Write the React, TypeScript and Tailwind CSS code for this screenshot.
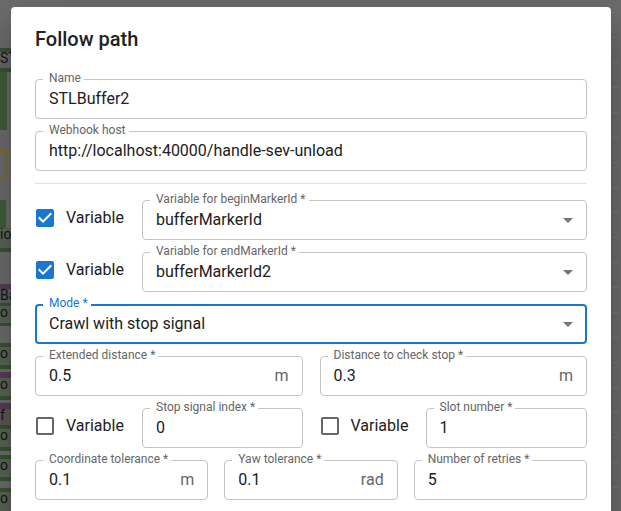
import { ReactNode } from "react";
import clsx from "clsx";

// pieces of the workflow canvas that show behind the dialog's backdrop
const leftNodes = [
  { top: 48, height: 4, width: 40, cls: "bg-[#3a5535]" },
  { top: 52, height: 16, width: 40, cls: "bg-[#6a6a6a]", text: "STL" },
  { top: 68, height: 4, width: 40, cls: "bg-[#3a5535]" },
  { top: 72, height: 58, width: 7, cls: "bg-[#41603b]" },
  { top: 150, height: 30, width: 8, cls: "border-[3px] border-l-0 border-[#7f6f30]" },
  { top: 200, height: 28, width: 6, cls: "bg-[#41603b]" },
  { top: 228, height: 20, width: 40, cls: "bg-[#5c6757]", text: "io" },
  { top: 248, height: 4, width: 40, cls: "bg-[#3a5535]" },
  { top: 284, height: 5, width: 40, cls: "bg-[#5a3e5a]" },
  { top: 289, height: 14, width: 40, cls: "bg-[#636363]", text: "Ba" },
  { top: 303, height: 3, width: 40, cls: "bg-[#3a5535]" },
  { top: 306, height: 17, width: 40, cls: "bg-[#5c6757]", text: "o" },
  { top: 323, height: 3, width: 40, cls: "bg-[#3a5535]" },
  { top: 343, height: 4, width: 40, cls: "bg-[#3a5535]" },
  { top: 347, height: 18, width: 40, cls: "bg-[#5c6757]", text: "o" },
  { top: 365, height: 4, width: 40, cls: "bg-[#3a5535]" },
  { top: 372, height: 6, width: 40, cls: "bg-[#5a3e5a]" },
  { top: 378, height: 18, width: 40, cls: "bg-[#5c6757]", text: "o" },
  { top: 396, height: 4, width: 40, cls: "bg-[#3a5535]" },
  { top: 403, height: 6, width: 40, cls: "bg-[#5a3e5a]" },
  { top: 409, height: 16, width: 40, cls: "bg-[#625853]", text: "f" },
  { top: 425, height: 4, width: 40, cls: "bg-[#3a5535]" },
  { top: 429, height: 18, width: 40, cls: "bg-[#5c6757]", text: "o" },
  { top: 447, height: 4, width: 40, cls: "bg-[#3a5535]" },
  { top: 455, height: 4, width: 40, cls: "bg-[#3a5535]" },
  { top: 459, height: 18, width: 40, cls: "bg-[#5c6757]", text: "o" },
  { top: 477, height: 4, width: 40, cls: "bg-[#3a5535]" },
  { top: 488, height: 4, width: 40, cls: "bg-[#3a5535]" },
  { top: 492, height: 19, width: 40, cls: "bg-[#5c6757]", text: "o" },
];

const ticks = Array.from({ length: 20 }, (_, i) => 12 + i * 25);

interface FieldProps {
  label: string;
  value: string;
  unit?: string;
  select?: boolean;
  focused?: boolean;
  className?: string;
}

function Field({ label, value, unit, select, focused, className }: FieldProps) {
  return (
    <div
      className={clsx(
        "relative h-10 rounded",
        focused ? "border-2 border-[#1976d2]" : "border border-[#c4c4c4]",
        className
      )}
    >
      <span
        className={clsx(
          "absolute bg-white pl-[6px] pr-[3px] text-xs leading-[17px] whitespace-nowrap",
          focused ? "-top-[11px] left-[6px] text-[#1976d2]" : "-top-[10px] left-[7px] text-[#666666]"
        )}
      >
        {label}
      </span>
      <div
        className={clsx(
          "flex h-full items-center text-base leading-6 text-[#212121]",
          focused ? "pl-3 pr-[5px]" : "pl-[13px] pr-[6px]",
          unit && (focused ? "pr-3" : "pr-[13px]")
        )}
      >
        <span className="flex-1 truncate">{value}</span>
        {unit && <span className="text-[#666666]">{unit}</span>}
        {select && (
          <svg viewBox="0 0 24 24" className="h-6 w-6 fill-[#757575]">
            <path d="M7 10l5 5 5-5z" />
          </svg>
        )}
      </div>
    </div>
  );
}

function CheckLabel({ checked, className }: { checked?: boolean; className?: string }) {
  return (
    <div className={clsx("flex items-center pb-1", className)}>
      <svg viewBox="0 0 24 24" className={clsx("-ml-[2px] h-6 w-6", checked ? "fill-[#1976d2]" : "fill-[#666666]")}>
        {checked ? (
          <path d="M19 3H5c-1.11 0-2 .9-2 2v14c0 1.1.89 2 2 2h14c1.11 0 2-.9 2-2V5c0-1.1-.89-2-2-2zm-9 14l-5-5 1.41-1.41L10 14.17l7.59-7.59L19 8l-9 9z" />
        ) : (
          <path d="M19 5v14H5V5h14m0-2H5c-1.1 0-2 .9-2 2v14c0 1.1.9 2 2 2h14c1.1 0 2-.9 2-2V5c0-1.1-.9-2-2-2z" />
        )}
      </svg>
      <span className="ml-[9px] text-base leading-6 text-[#212121]">Variable</span>
    </div>
  );
}

function Row({ children }: { children: ReactNode }) {
  return <div className="flex">{children}</div>;
}

export default function App() {
  return (
    <div className="relative h-[511px] w-[621px] overflow-hidden bg-[#6e6e6e] font-[Roboto,sans-serif]">
      {leftNodes.map((n, i) => (
        <div
          key={i}
          className={clsx("absolute left-0", n.cls)}
          style={{ top: n.top, height: n.height, width: n.width }}
        >
          {n.text && (
            <span className="block whitespace-nowrap text-sm leading-[13px] text-[#151515]">
              {n.text}
            </span>
          )}
        </div>
      ))}
      {ticks.map((t) => (
        <div key={t} className="absolute left-[613px] h-px w-[5px] bg-[#7c7c7c]" style={{ top: t }} />
      ))}

      <div className="absolute left-[11px] top-[7px] h-[520px] w-[600px] rounded bg-white shadow-[0_11px_15px_-7px_rgba(0,0,0,0.2),0_24px_38px_3px_rgba(0,0,0,0.14),0_9px_46px_8px_rgba(0,0,0,0.12)]">
        <h2 className="px-6 pt-4 text-xl font-medium leading-8 text-[#212121]">Follow path</h2>

        <div className="mt-6 flex flex-col gap-3 px-6">
          <Field label="Name" value="STLBuffer2" />
          <Field label="Webhook host" value="http://localhost:40000/handle-sev-unload" />
          <div className="mb-1 h-px bg-[#e0e0e0]" />

          <Row>
            <CheckLabel checked className="w-[107px]" />
            <Field label="Variable for beginMarkerId *" value="bufferMarkerId" select className="flex-1" />
          </Row>
          <Row>
            <CheckLabel checked className="w-[107px]" />
            <Field label="Variable for endMarkerId *" value="bufferMarkerId2" select className="flex-1" />
          </Row>

          <Field label="Mode *" value="Crawl with stop signal" select focused />

          <div className="grid grid-cols-2 gap-[17px]">
            <Field label="Extended distance *" value="0.5" unit="m" />
            <Field label="Distance to check stop *" value="0.3" unit="m" />
          </div>

          <div className="grid grid-cols-2 gap-[17px]">
            <Row>
              <CheckLabel className="w-[107px]" />
              <Field label="Stop signal index *" value="0" className="flex-1" />
            </Row>
            <Row>
              <CheckLabel className="w-[106px]" />
              <Field label="Slot number *" value="1" className="flex-1" />
            </Row>
          </div>

          <div className="grid grid-cols-3 gap-4">
            <Field label="Coordinate tolerance *" value="0.1" unit="m" />
            <Field label="Yaw tolerance *" value="0.1" unit="rad" />
            <Field label="Number of retries *" value="5" />
          </div>
        </div>
      </div>
    </div>
  );
}
